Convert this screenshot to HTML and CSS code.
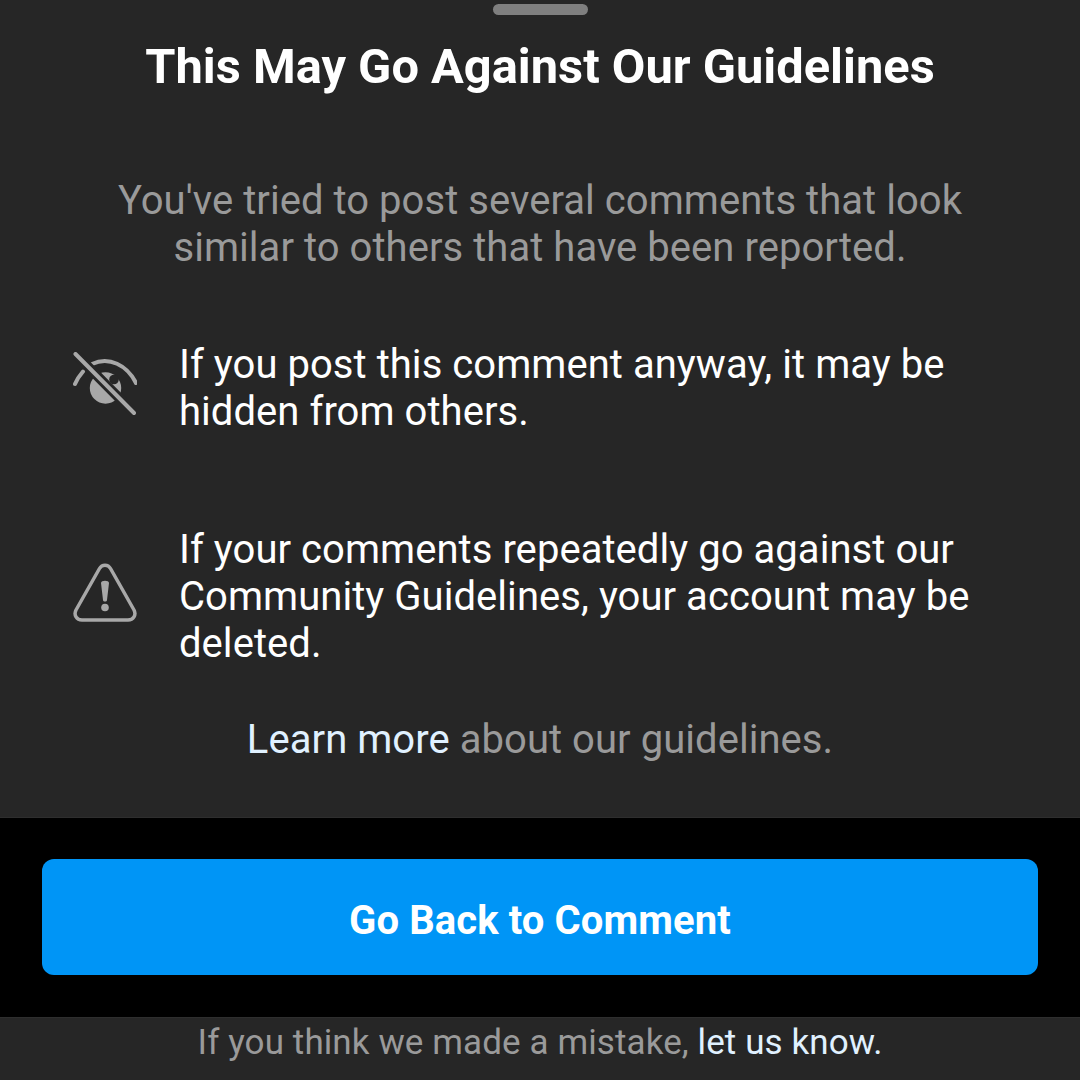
FILE: index.html
```html
<!DOCTYPE html>
<html lang="en">
<head>
  <meta charset="UTF-8">
  <meta name="viewport" content="width=device-width, initial-scale=1">
  <title>This May Go Against Our Guidelines</title>
  <link rel="stylesheet" href="styles.css">
</head>
<body>

  <!-- SHEET -->
  <div class="sheet">
    <div class="handle"></div>
    <h1 class="title">This May Go Against Our Guidelines</h1>
    <p class="intro">You've tried to post several comments that look<br>similar to others that have been reported.</p>

    <div class="row row-hidden">
      <svg class="row-icon" viewBox="0 0 64 64" fill="none" stroke="#a8a8a8" stroke-width="4" stroke-linecap="round">
        <path d="M2 32 C4 27 7 23 10 19.500"/>
        <path d="M19 12 C36 4 54 13 63 31"/>
        <circle cx="32.500" cy="36" r="15.700" fill="#a8a8a8" stroke="none"/>
        <circle cx="41" cy="27.500" r="4.800" fill="#262626" stroke="none"/>
        <path d="M2.500 2 L61 61" stroke="#262626" stroke-width="10"/>
        <path d="M2.500 2 L61 61"/>
      </svg>
      <p class="row-text">If you post this comment anyway, it may be<br>hidden from others.</p>
    </div>

    <div class="row row-warn">
      <svg class="row-icon" viewBox="0 0 64 60" fill="none" stroke="#a8a8a8" stroke-width="3.500" stroke-linejoin="round" stroke-linecap="round">
        <path d="M26.500 5.500 C29 1 35 1 37.500 5.500 L61 47 C63.500 52 60.500 57 55 57 L9 57 C3.500 57 0.500 52 3 47 Z"/>
        <path d="M28 20 C28 17 36 17 36 20 L34 37 C34 39 30 39 30 37 Z" fill="#a8a8a8" stroke="none"/>
        <circle cx="32" cy="44.500" r="3.800" fill="#a8a8a8" stroke="none"/>
      </svg>
      <p class="row-text">If your comments repeatedly go against our<br>Community Guidelines, your account may be<br>deleted.</p>
    </div>

    <p class="learn"><span class="link-blue">Learn more</span> about our guidelines.</p>
  </div>

  <!-- BUTTON -->
  <div class="action">
    <button class="back-btn">Go Back to Comment</button>
  </div>

  <!-- FOOTER -->
  <div class="footer">
    <p>If you think we made a mistake, <span class="link-white">let us know.</span></p>
  </div>

</body>
</html>
```

FILE: styles.css
```css
* {
  margin: 0;
  padding: 0;
  box-sizing: border-box;
}
body {
  width: 1080px;
  height: 1080px;
  overflow: hidden;
  background: #000;
  color: #fff;
  font-family: Roboto, "Liberation Sans", sans-serif;
  font-size: 40px;
  line-height: 47px;
  letter-spacing: 0.05px;
}
/* ----- SHEET ----- */
.sheet {
  height: 818px;
  background: #262626;
  padding-top: 4px;
  border-bottom: 1px solid #2e2e2e;
}
.handle {
  width: 95px;
  height: 11px;
  margin: 0 auto;
  background: #7f7f7f;
  border-radius: 6px;
}
.title {
  margin-top: 25px;
  font-size: 48.800px;
  line-height: 54px;
  font-weight: 700;
  letter-spacing: 0;
  text-align: center;
}
.intro {
  margin-top: 83px;
  text-align: center;
  color: #9a9a9a;
}
.row {
  display: flex;
  align-items: center;
  padding-left: 73px;
}
.row-hidden {
  margin-top: 70px;
}
.row-warn {
  margin-top: 91px;
}
.row-icon {
  width: 64px;
  flex-shrink: 0;
  margin-right: 42px;
  margin-bottom: 8px;
}
.learn {
  margin-top: 49px;
  text-align: center;
  color: #9a9a9a;
}
.link-blue {
  color: #e0f1ff;
}
/* ----- BUTTON ----- */
.action {
  height: 199px;
  padding: 41px 42px 0;
}
.back-btn {
  display: block;
  width: 100%;
  height: 116px;
  border: none;
  border-radius: 12px;
  background: #0095f6;
  color: #fff;
  font-family: inherit;
  font-size: 40px;
  font-weight: 700;
  letter-spacing: 0.1px;
  padding-top: 6px;
}
/* ----- FOOTER ----- */
.footer {
  height: 63px;
  background: #262626;
  border-top: 1px solid #2e2e2e;
  text-align: center;
  color: #9a9a9a;
  padding-top: 1px;
  font-size: 35px;
  letter-spacing: 0.1px;
}
.link-white {
  color: #e0f1ff;
}
```
